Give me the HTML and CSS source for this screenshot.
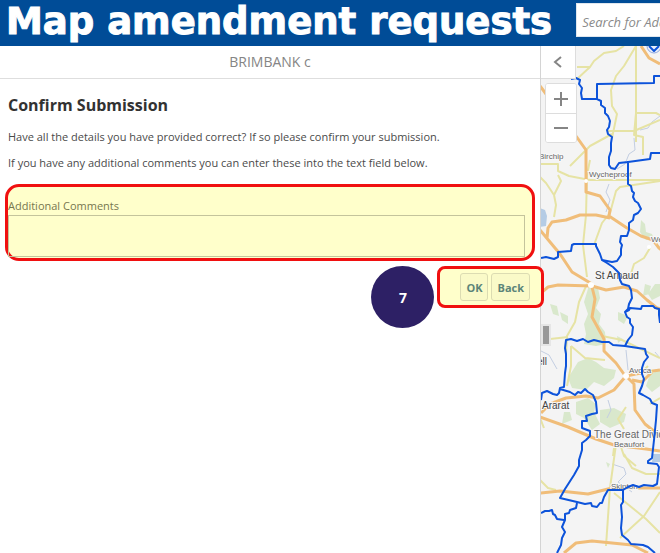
FILE: index.html
```html
<!DOCTYPE html>
<html lang="en">
<head>
<meta charset="utf-8">
<meta name="viewport" content="width=device-width, initial-scale=1">
<title>Map amendment requests</title>
<link rel="stylesheet" href="styles.css">
</head>
<body>
<header class="banner">
  <h1 class="banner-title">Map amendment requests</h1>
  <input class="search" type="text" placeholder="Search for Address" aria-label="Search for Address">
</header>
<div class="workspace">
  <main class="panel">
    <div class="panel-head">BRIMBANK c</div>
    <form class="panel-body">
      <h2 class="heading">Confirm Submission</h2>
      <p class="text">Have all the details you have provided correct? If so please confirm your submission.</p>
      <p class="text">If you have any additional comments you can enter these into the text field below.</p>
      <div class="highlight comments">
        <label class="label" for="comments">Additional Comments</label>
        <textarea class="field" id="comments"></textarea>
      </div>
      <div class="action-row">
        <span class="step">7</span>
        <div class="highlight actions">
          <button class="button" type="button">OK</button>
          <button class="button" type="button">Back</button>
        </div>
      </div>
    </form>
  </main>
  <section class="map" aria-label="Map">
    <svg class="map-canvas" viewBox="541 46 119 507" preserveAspectRatio="xMinYMin slice" aria-hidden="true">
      <rect class="land" x="540" y="46" width="120" height="507"/>
      <g class="forest">
        <path d="M590 282l8 6 2 10-4 10 5 6-2 10 6 8 1 12-10 2-12-2 2-10-2-10 4-10-4-12zM550 304l7 2 2 10-6-2zM560 312l8 4v8l-6-4zM655 284h5v12l-8 4-4-6zM641 220l4 4 1 8 6 2 2 5-8 1-6-8zM578 362l10-4 8 4 8 6 12 2-2 8-10 8-10-4-8 8-14-2-4-10zM576 402l12-4 8 6-2 8 6 12-8 6-8-12-8-4zM564 412h6l2 8-10 4zM600 410l14-2 12 6-2 8-14 6-10-6zM645 284l6 2-2 8-6 2zM650 374l10-4v16l-8 6-6-6zM606 462l4 2-2 4zM617 336l6 3-5 4zM618 312l10 4-4 8-6-4z"/>
      </g>
      <g class="water">
        <path d="M540 208l5 2 2 6-1 10-6 1zM653 454h7v8h-8z"/>
        <circle class="shield" cx="654" cy="46" r="7"/>
      </g>
      <path class="stream" d="M660 116l-8 6-4 6-8 2M634 138l1 12-6 4-4 10-8 5M609 184l-3 8 4 8-4 12M541 351l8 4 8 14M612 464l12 4 2 6-8 8 14 10M626 350l2 20M655 352l5 6M608 400l3 10-4 8"/>
      <g class="minor">
        <path d="M636 46v96M577 67h13l-13 12M590 67l4-6 10-8 12-2 8-5M636 46l-12 20-8 10-5 14 1 16 5 8-5 24M636 113h20l4 2M608 131h26l26-11M636 113l-2 22 9 2v18M612 134l-22 12-20 20M540 164h18v7l11 5 21 4h70M558 175l3 6-7 14 2 10-2 12M590 160l-3 15-1 40-3 30 4 32M554 195l-8-12-6-6M594 245l8-22 8-10 6-22 4-4 40-6"/>
        <path d="M650 248l-6 10-10 6-5 16M587 284l-8 18-4 20-8 14-1 18M540 340l28-3M602 336l20 4 38 18M571 346l14 12 20 2M571 346v20l-4 20M640 374l8-8M626 407l-8 12 6 10M616 444l-6 44-4 58M620 444l4 12 12 10M624 454l8 14 14 6h14M614 493l32 26 14 14M660 492l-16 24-24 22M540 480l8 8 8 2M540 418l4 10M650 404l10-6M614 448l-1 8"/>
      </g>
      <g class="major">
        <path d="M641 46l8 12 11 6M540 86l6 8M576 136l10 14v42l14 4 10 14-1 6 18 12 14 8 12 4 6 8 10 8M540 230l10 12 10 12 12 18 20 12M547 238l1-10 4-6 14-2 14-5h16l14 3M540 294l8-7 10-2 34 1 14 4 18-3 13 4 10 9 10 8 5 1M592 287l3 12-3 18 12 22v12l12 12 10 14M626 376l-12 14-16 8-12-2-20 2-16 6-9 9M626 376l8 8 1 26 10 14 15 12M626 376l20-4 14-2M540 417l28 10 28 12 18 6 32 4 14 2M540 493l20-2 28 3 24-6 48 0M564 553l12-10 16-2 40 4 16 8M632 380l10 2 10-10"/>
      </g>
      <g class="junctions">
        <circle cx="586" cy="181" r="2"/><circle cx="591" cy="285" r="3"/><circle cx="626" cy="376" r="3"/><circle cx="649" cy="247" r="2"/>
      </g>
      <g class="places">
        <text x="539" y="159">Birchip</text>
        <text x="589" y="177">Wycheproof</text>
        <text x="651" y="242">Wedderburn</text>
        <text class="town" x="595" y="279">St Arnaud</text>
        <text class="town" x="537" y="365">ell</text>
        <text x="629" y="373">Avoca</text>
        <text class="town" x="542" y="409">Ararat</text>
        <text class="town range" x="594" y="438">The Great Dividing Range</text>
        <text x="614" y="447">Beaufort</text>
        <text x="611" y="489">Skipton</text>
      </g>
      <g class="boundary">
        <path d="M571 79L576 78 580 80 579 84 582 88 581 93 582 99H597V84L654 83V76H660M597 99L601 101V105L605 108V113L608 116 610 121 609 127 607 130 608 134 612 137 611 143V151L609 157V165L611 168 615 169 619 163 628 162 650 159 651 153H660M628 161V184L631 186 632 191 634 193 633 197 635 201 638 203 641 209 638 213 634 215 633 220 629 223V230L627 236H621L620 242 622 245 621 249V255L617 261 612 262 602 260 600 254 596 246V244H574L572 245 571 251 558 252V257L554 259 546 257 541 258"/>
        <path d="M602 260L607 263 613 267 619 273 620 280 622 284 629 286 631 290 632 298 629 304 628 309 625 312 627 317 630 319V323L633 327 632 335 628 340 625 346M625 312L629 310 630 308 641 309 642 306 653 306 655 308 659 309V315L660 323"/>
        <path d="M541 400L542 393 547 391 553 394 557 395 559 393 560 388 564 387 565 373 566 366V354L565 348 566 340 571 339 577 341 583 339 588 342 594 340 602 342 609 342 613 345 625 346 638 348 645 349 646 354 648 357 644 362 642 368V374L644 379 642 386 639 393 643 395 650 399 652 403 657 405 656 420 654 440 652 458 648 461V463L657 464 659 467 657 484 653 486 644 485 639 487 633 485 628 487 623 490H608L604 497 602 503 600 503 597 507 592 506 591 503 585 504 577 502 560 498 565 489 574 475 579 466V460L582 450V443L586 440 590 436V431L582 428V421H587L586 416 592 414 597 413 596 402 593 395 588 392 585 389 581 393 578 392 575 395 570 392 560 389"/>
        <path d="M577 503L576 508 570 510 569 513 565 514V520L562 527 565 532 562 538 561 545 557 553M541 513L545 511H549L552 510 553 514 555 515 557 519 564 520M623 490V502L621 505 622 517 621 528 622 535 628 540 631 544 643 545 648 547 655 553"/>
        <path d="M649 46l5 5 5-5"/>
      </g>
    </svg>
    <button class="collapse" type="button" aria-label="Collapse panel">
      <svg class="icon" viewBox="0 0 16 16" aria-hidden="true"><path d="M11 3 5 8l6 5"/></svg>
    </button>
    <div class="zoom">
      <button class="zoom-button" type="button" aria-label="Zoom in">
        <svg class="icon" viewBox="0 0 16 16" aria-hidden="true"><path d="M1 8h14M8 1v14"/></svg>
      </button>
      <button class="zoom-button" type="button" aria-label="Zoom out">
        <svg class="icon" viewBox="0 0 16 16" aria-hidden="true"><path d="M1 8h14"/></svg>
      </button>
    </div>
    <span class="handle"></span>
  </section>
</div>
</body>
</html>
```
FILE: styles.css
```css
* { box-sizing: border-box; }

body {
  margin: 0;
  min-height: 100vh;
  display: flex;
  flex-direction: column;
  overflow: hidden;
  background: #fff;
  color: #4a4a4a;
  font-family: "Open Sans", "Noto Sans", sans-serif;
  font-size: 11px;
}

.banner {
  display: flex;
  align-items: flex-start;
  gap: 24px;
  height: 46px;
  padding: 0 0 0 6px;
  background: #004c97;
}

.banner-title {
  flex: none;
  margin: 0;
  color: #fff;
  font-family: "DejaVu Sans", sans-serif;
  font-size: 37px;
  font-weight: 700;
  line-height: 43px;
  white-space: nowrap;
  -webkit-text-stroke: 1px #fff;
}

.search {
  flex: 1;
  min-width: 0;
  height: 34px;
  margin-top: 3px;
  padding: 3px 0 0 5px;
  border: 1px solid #dfe6ee;
  border-right: 0;
  background: #fff;
  font-family: "Open Sans", sans-serif;
  font-size: 13px;
  font-style: italic;
}

.search::placeholder { color: #8a8a8a; }

.workspace {
  flex: 1;
  display: grid;
  grid-template-columns: 9fr 2fr;
}

.panel {
  position: relative;
  z-index: 1;
  min-width: 0;
}

.panel-head {
  height: 33px;
  border-bottom: 1px solid #dedede;
  color: #858585;
  font-size: 14px;
  line-height: 31px;
  text-align: center;
}

.panel-body { padding: 13px 0 0 5px; }

.heading {
  margin: 0 3px 10px;
  color: #323232;
  font-size: 16px;
  font-weight: 700;
  line-height: 26px;
}

.text {
  margin: 0 3px 8px;
  line-height: 18px;
}

.highlight {
  border: 3px solid #f01010;
  background: #ffffcb;
}

.comments {
  margin: 12px 5px 5px 0;
  padding: 10px 7px 1px 0;
  border-radius: 14px;
}

.label {
  display: block;
  color: #77774f;
  line-height: 18px;
}

.field {
  display: block;
  width: 100%;
  height: 42px;
  border: 1px solid #c4c49c;
  background: transparent;
  resize: none;
}

.action-row {
  display: flex;
  justify-content: flex-end;
  align-items: flex-start;
  gap: 3px;
  margin-right: -4px;
}

.step {
  display: flex;
  align-items: center;
  justify-content: center;
  width: 63px;
  height: 62px;
  border-radius: 50%;
  background: #2d2065;
  color: #fff;
  font-size: 14px;
  font-weight: 700;
}

.actions {
  display: flex;
  gap: 3px;
  padding: 4px 11px 4px 20px;
  border-radius: 8px;
}

.button {
  height: 28px;
  padding: 0 5px;
  border: 1px solid #dcdcb2;
  border-radius: 3px;
  background: #fafac8;
  color: #5c8579;
  font: 700 11px "Open Sans", sans-serif;
}

.map {
  position: relative;
  overflow: hidden;
  border-left: 1px solid #d4d4d4;
}

.map-canvas {
  position: absolute;
  inset: 0;
  width: 100%;
  height: 100%;
}

.land { fill: #f4f4f4; }
.forest { fill: #d9e8cc; }
.water { fill: #b5cce5; }
.shield { fill: #e8eef8; stroke: #91a9e0; }
.stream { fill: none; stroke: #c3cee2; }
.minor { fill: none; stroke: #e6e3a4; stroke-width: 2; stroke-linejoin: round; }
.major { fill: none; stroke: #f0bd79; stroke-width: 3; stroke-linejoin: round; }
.junctions { fill: #fff; }
.boundary { fill: none; stroke: #0d53da; stroke-width: 2; stroke-linejoin: round; }

.places {
  fill: #666;
  stroke: #f8f8f8;
  stroke-width: 2px;
  paint-order: stroke;
  font-family: "Liberation Sans", Arial, sans-serif;
  font-size: 8px;
}

.places .town { fill: #444; font-size: 10px; }
.places .range { fill: #666; }

.collapse,
.zoom-button {
  display: flex;
  align-items: center;
  justify-content: center;
  padding: 0;
  border: 0;
  background: #fff;
}

.collapse {
  position: absolute;
  top: 0;
  left: 0;
  width: 35px;
  height: 33px;
  border-right: 1px solid #ddd;
  border-bottom: 1px solid #ddd;
}

.zoom {
  position: absolute;
  top: 37px;
  left: 4px;
  width: 32px;
  border: 1px solid #ddd;
  border-radius: 3px;
  background: #fff;
  overflow: hidden;
}

.zoom-button { width: 100%; height: 29px; }
.zoom-button + .zoom-button { border-top: 1px solid #ddd; }

.icon {
  width: 16px;
  height: 16px;
  fill: none;
  stroke: #858585;
  stroke-width: 2;
}

.handle {
  position: absolute;
  top: 278px;
  left: 0;
  width: 10px;
  height: 22px;
  border: 2px solid #e6e6e6;
  background: #999;
}
```
